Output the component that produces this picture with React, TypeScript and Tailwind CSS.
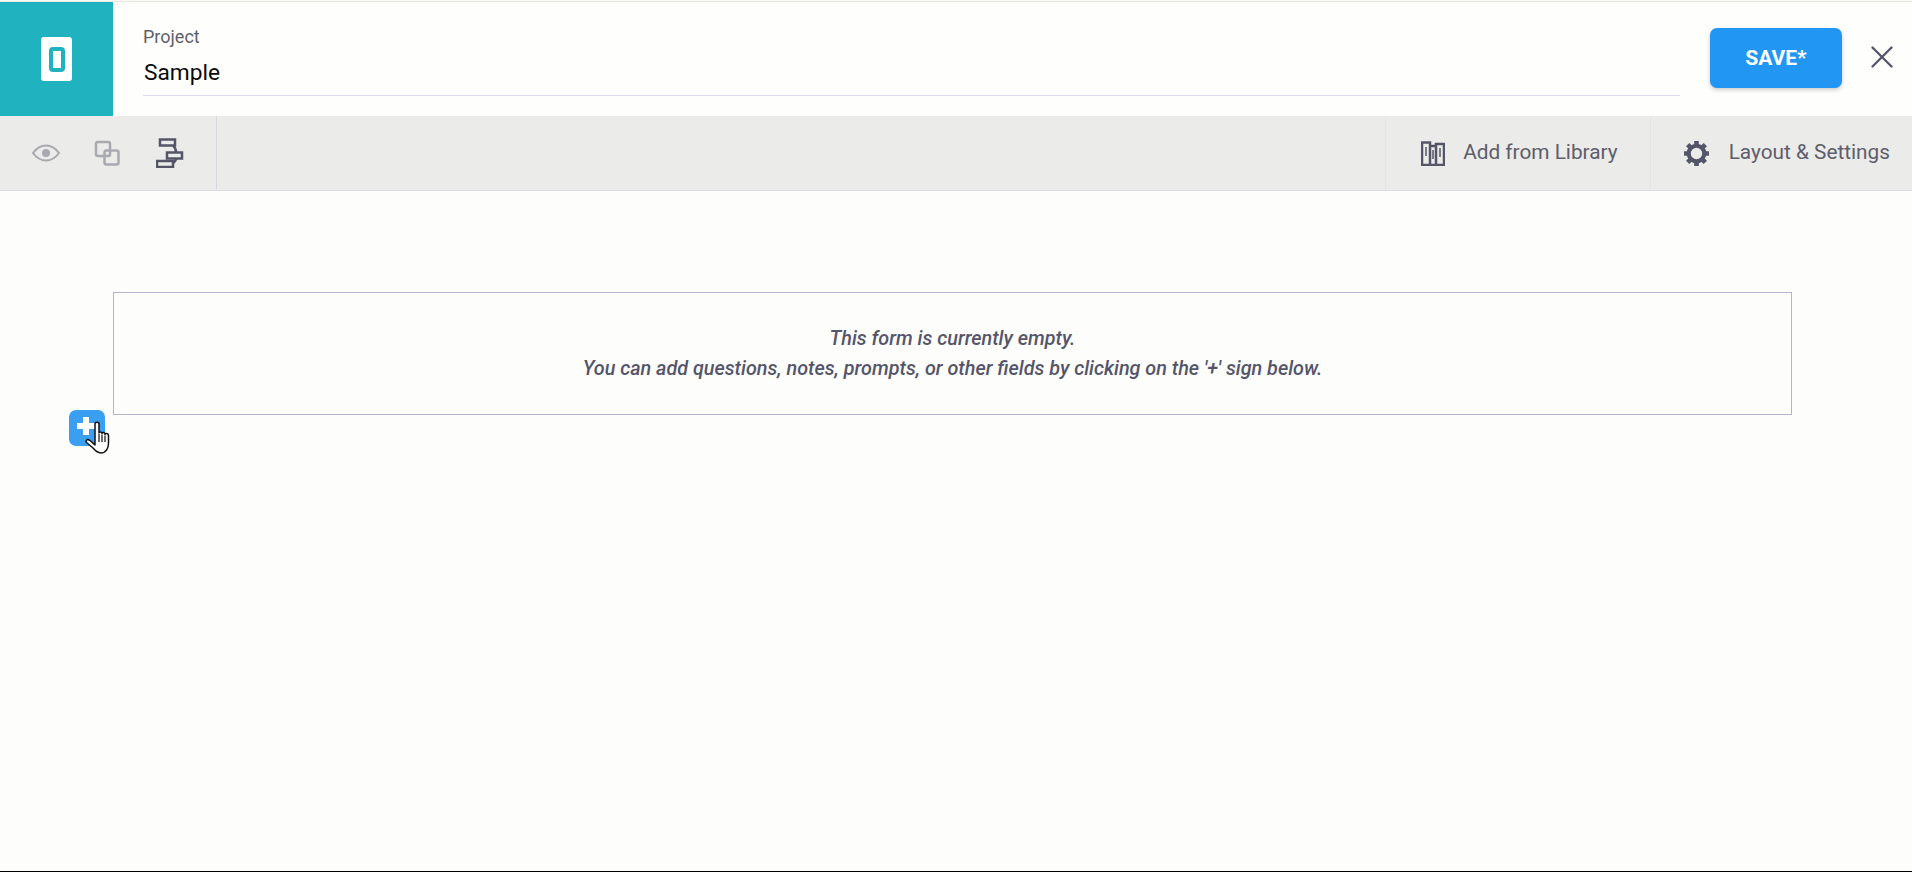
import { X } from "lucide-react";

function EyeIcon() {
  return (
    <svg width="30" height="20" viewBox="0 0 30 20" fill="none">
      <path d="M2 10C6 4.500 10 2.500 15 2.500S24 4.500 28 10C24 15.500 20 17.500 15 17.500S6 15.500 2 10Z" stroke="#a9a9b0" strokeWidth="2" />
      <circle cx="15" cy="10" r="4" fill="#a9a9b0" />
    </svg>
  );
}

function CopyIcon() {
  return (
    <svg width="26" height="26" viewBox="0 0 26 26" fill="none" stroke="#a9a9b0" strokeWidth="2.500">
      <rect x="2" y="2" width="14" height="14" rx="2" />
      <rect x="10.500" y="10.500" width="14" height="14" rx="2" />
    </svg>
  );
}

function FlowIcon() {
  return (
    <svg width="28" height="30" viewBox="0 0 28 30" fill="none" stroke="#55556a" strokeWidth="2.500">
      <rect x="4" y="1.500" width="15" height="6" />
      <rect x="11" y="14.500" width="15" height="6" />
      <rect x="1" y="23" width="16" height="6" />
      <path d="M17 7.500Q20 10 20 14.500M20 20.500Q20 23 17 25" />
    </svg>
  );
}

function LibraryIcon() {
  return (
    <svg width="24" height="25" viewBox="0 0 24 25" fill="none" stroke="#55556a" strokeWidth="2.500">
      <path d="M1 1.500H9V24H1ZM9 5H15V24H9ZM15 3H23V24H15Z" />
      <path d="M5 6V15M12 9V18M19 7V16" strokeWidth="1.500" />
    </svg>
  );
}

function GearIcon() {
  return (
    <svg width="27" height="27" viewBox="0 0 26 26" fill="none" stroke="#55556a">
      <circle cx="13" cy="13" r="7.500" strokeWidth="4" />
      <path
        d="M13 1V5M13 21V25M1 13H5M21 13H25M4.500 4.500L7.400 7.400M18.600 18.600L21.500 21.500M21.500 4.500L18.600 7.400M7.400 18.600L4.500 21.500"
        strokeWidth="4.500"
      />
    </svg>
  );
}

function HandCursor() {
  return (
    <svg width="26" height="34" viewBox="0 0 26 34" className="absolute left-[16px] top-[11px]">
      <path
        d="M10 3C10 .800 14 .800 14 3V12C14 10.500 17 10.500 17 12.500C17 11 20 11 20 13.500C20 12 23.500 12 23.500 14.500V22C23.500 27 21 32 16 32C12 32 10.500 30 8 27L1.500 21.500C0 19.500 2.500 17.500 5 19.500L10 24Z"
        fill="#fff"
        stroke="#111"
        strokeWidth="1.500"
        strokeLinejoin="round"
      />
      <path d="M14 13V21M17 13.500V21M20 14.500V21" stroke="#111" strokeWidth="1.200" />
    </svg>
  );
}

export default function App() {
  return (
    <div className="flex h-[872px] w-[1912px] flex-col overflow-hidden border-b border-black bg-[#fdfdfc] font-['Roboto',sans-serif]">
      <header className="mt-px flex h-[115px] shrink-0 border-t border-[#e9e9e0] bg-[#fefefc] shadow-[0_1px_2px_rgba(0,0,0,0.25)]">
        <div className="flex w-[113px] shrink-0 items-center justify-center bg-[#20b2bf]">
          <div className="flex h-[44px] w-[31px] items-center justify-center rounded-[3px] bg-white">
            <div className="h-[25px] w-[16px] rounded-[4px] border-[4px] border-[#20b2bf]" />
          </div>
        </div>
        <div className="ml-[30px] flex w-[1537px] flex-col">
          <span className="mt-[24px] text-[18px] leading-[22px] text-[#5f5f6b]">Project</span>
          <div className="mt-[11px] border-b border-[#dcdce8] pb-[8px] pl-px text-[22.700px] leading-[28px] text-[#0a0a0a]">Sample</div>
        </div>
        <button className="ml-[30px] mt-[26px] h-[60px] w-[132px] rounded-[7px] bg-[#2196f3] pt-px text-[21px] font-bold text-white shadow-[0_2px_4px_rgba(0,0,0,0.2)]">
          SAVE*
        </button>
        <div className="ml-[21px] mt-[36px]">
          <X size={38} strokeWidth={1.500} color="#55556a" />
        </div>
      </header>

      <div className="flex h-[75px] shrink-0 items-center border-b border-[#dcdce6] bg-[#ebebe9] text-[20.800px] text-[#5d5d6c]">
        <div className="flex h-full w-[217px] items-center border-r border-[#d8d8e0] pl-[31px]">
          <EyeIcon />
          <div className="ml-[33px]"><CopyIcon /></div>
          <div className="ml-[36px]"><FlowIcon /></div>
        </div>
        <div className="flex-1" />
        <div className="flex h-full items-center border-l border-[#e4e4e4] pl-[35px] pr-[32px]">
          <LibraryIcon />
          <span className="ml-[18px]">Add from Library</span>
        </div>
        <div className="flex h-full items-center border-l border-[#e4e4e4] pl-[32px] pr-[22px]">
          <GearIcon />
          <span className="ml-[19px]">Layout &amp; Settings</span>
        </div>
      </div>

      <main className="flex-1 pl-[113px] pr-[120px] pt-[101px]">
        <div className="relative flex h-[123px] flex-col items-center justify-center border border-[#b4b4cc] text-[19.800px] font-medium italic leading-[30px] text-[#55556a]">
          <p>This form is currently empty.</p>
          <p>You can add questions, notes, prompts, or other fields by clicking on the '+' sign below.</p>
          <div className="absolute left-[-45px] top-[117px] flex h-[36px] w-[36px] items-center justify-center rounded-[7px] bg-[#3a9ff0]">
            <span className="relative mb-[4px] mr-[3px] block h-[18px] w-[18px]">
              <span className="absolute left-[6px] top-0 h-[18px] w-[6px] bg-white" />
              <span className="absolute left-0 top-[6px] h-[6px] w-[18px] bg-white" />
            </span>
            <HandCursor />
          </div>
        </div>
      </main>
    </div>
  );
}
